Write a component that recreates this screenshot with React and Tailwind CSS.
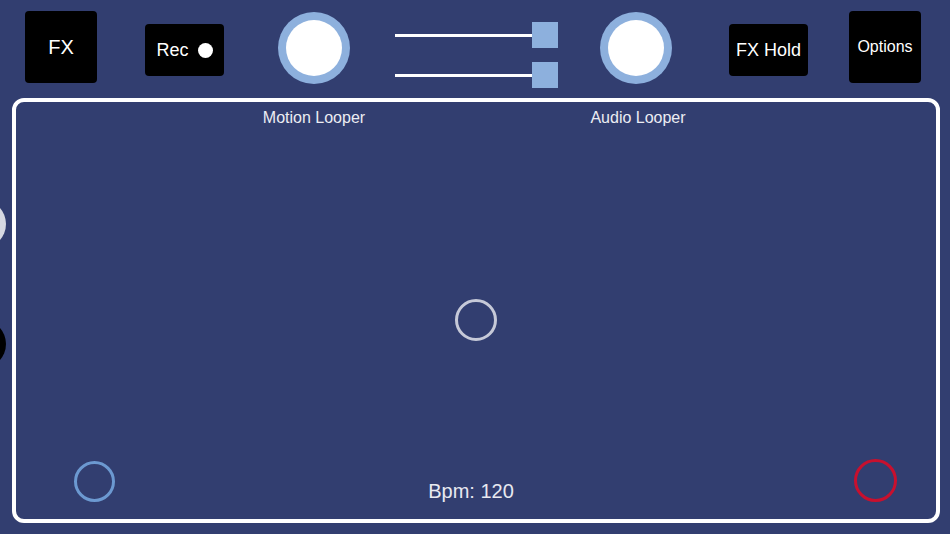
import React from "react";

function Knob() {
  return (
    <div className="w-[72px] h-[72px] rounded-full bg-[#8db0dd] flex items-center justify-center shrink-0">
      <div className="w-[56px] h-[56px] rounded-full bg-white" />
    </div>
  );
}

function SliderRow() {
  return (
    <div className="flex items-center h-[26px]">
      <div className="w-[137px] h-[3px] bg-white" />
      <div className="w-[26px] h-[26px] bg-[#8db0dd]" />
    </div>
  );
}

export default function App() {
  return (
    <div
      className="relative w-[950px] h-[534px] bg-[#323e70] overflow-hidden text-white"
      style={{ fontFamily: '"Liberation Sans", Arial, sans-serif' }}
    >
      {/* left edge partial shapes */}
      <div className="absolute left-[-42px] top-[200px] w-[48px] h-[48px] rounded-full bg-[#d6d9e2]" />
      <div className="absolute left-[-42px] top-[320px] w-[48px] h-[48px] rounded-full bg-black" />

      {/* top bar */}
      <div className="h-[98px] pt-[11px] pl-[25px] flex items-start">
        <div className="w-[72px] h-[72px] bg-black rounded-[4px] flex items-center justify-center text-[20px]">
          FX
        </div>
        <div className="ml-[48px] mt-[13px] w-[79px] h-[52px] bg-black rounded-[4px] flex items-center justify-center gap-[9px] text-[18px]">
          <span>Rec</span>
          <span className="w-[15px] h-[15px] rounded-full bg-white" />
        </div>
        <div className="ml-[54px] mt-[1px]">
          <Knob />
        </div>
        <div className="ml-[45px] mt-[11px] flex flex-col gap-[14px]">
          <SliderRow />
          <SliderRow />
        </div>
        <div className="ml-[42px] mt-[1px]">
          <Knob />
        </div>
        <div className="ml-[57px] mt-[13px] w-[79px] h-[52px] bg-black rounded-[4px] flex items-center justify-center text-[18px]">
          FX Hold
        </div>
        <div className="ml-[41px] w-[72px] h-[72px] bg-black rounded-[4px] flex items-center justify-center text-[16px]">
          Options
        </div>
      </div>

      {/* main panel */}
      <div className="ml-[12px] w-[928px] h-[425px] border-[4px] border-white rounded-[12px] flex flex-col">
        <div className="pt-[7px] flex text-[16px] leading-[18px] text-[#ecedf3]">
          <div className="ml-[198px] w-[200px] text-center">Motion Looper</div>
          <div className="ml-[124px] w-[200px] text-center">Audio Looper</div>
        </div>
        <div className="mt-[172px] flex justify-center">
          <div className="w-[42px] h-[42px] rounded-full border-[3px] border-[#c6c9d8]" />
        </div>
        <div className="mt-auto mb-[17px] flex items-end">
          <div className="ml-[58px] w-[41px] h-[41px] rounded-full border-[3px] border-[#6c99d1]" />
          <div className="ml-[256px] w-[200px] text-center text-[20px] leading-[24px] text-[#e8e9f0] mb-[-1px]">
            Bpm: 120
          </div>
          <div className="ml-[283px] w-[43px] h-[43px] rounded-full border-[3px] border-[#c8102e]" />
        </div>
      </div>
    </div>
  );
}
